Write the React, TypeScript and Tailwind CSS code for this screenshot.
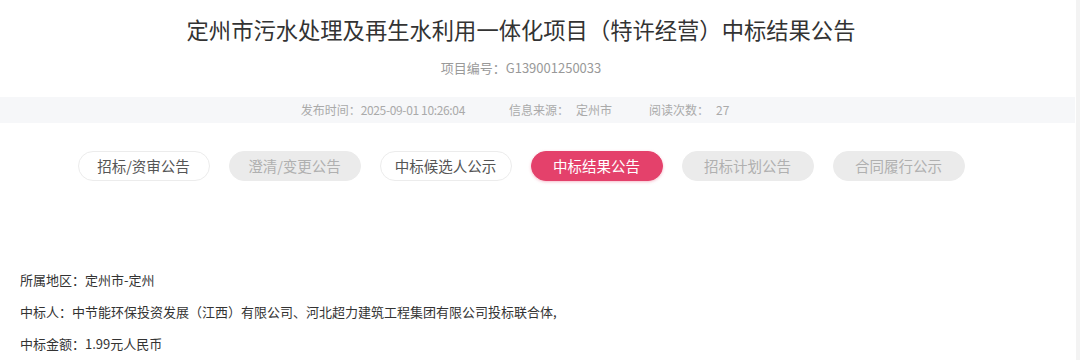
const tabs = [
  { label: "招标/资审公告", kind: "normal" },
  { label: "澄清/变更公告", kind: "disabled" },
  { label: "中标候选人公示", kind: "normal" },
  { label: "中标结果公告", kind: "active" },
  { label: "招标计划公告", kind: "disabled" },
  { label: "合同履行公示", kind: "disabled" },
];

const tabClass: Record<string, string> = {
  normal: "bg-white text-[#555] border border-[#ececec]",
  disabled: "bg-[#ebebeb] text-[#b0b0b0] border border-[#ebebeb]",
  active: "bg-[#e4416b] text-white border border-[#e4416b] shadow-[0_1px_3px_rgba(228,65,107,0.35)]",
};

const App = () => {
  return (
    <div
      className="w-[1080px] h-[360px] bg-white overflow-hidden flex"
      style={{ fontFamily: '"Noto Sans CJK SC", "Noto Sans", sans-serif' }}
    >
      <div className="w-[1076px] flex flex-col">
        <div className="w-[1042px] flex flex-col items-center">
          <h1 className="mt-[14px] text-[22.3px] leading-[30px] text-[#333] font-normal">
            定州市污水处理及再生水利用一体化项目（特许经营）中标结果公告
          </h1>
          <p className="mt-[16px] text-[13px] leading-[16px] text-[#999]">
            项目编号：G139001250033
          </p>
        </div>

        <div className="mt-[21px] h-[26px] w-[1075px] bg-[#f6f7f9] flex">
          <div className="w-[1030px] flex justify-center items-center text-[12px] text-[#aaa]">
            <span>
              发布时间：<span className="tracking-[-0.35px]">2025-09-01 10:26:04</span>
            </span>
            <span className="ml-[44px] flex gap-[7px]">
              <span>信息来源：</span>
              <span>定州市</span>
            </span>
            <span className="ml-[37px] flex gap-[7px]">
              <span>阅读次数：</span>
              <span>27</span>
            </span>
          </div>
        </div>

        <div className="w-[1042px] mt-[28px] flex justify-center gap-[19px]">
          {tabs.map((t) => (
            <div
              key={t.label}
              className={`w-[132px] h-[30px] rounded-full flex items-center justify-center text-[14.5px] ${tabClass[t.kind]}`}
            >
              {t.label}
            </div>
          ))}
        </div>

        <div className="mt-[90px] pl-[20px] flex flex-col gap-[14px] text-[13px] leading-[18px] text-[#333]">
          <p>所属地区：定州市-定州</p>
          <p>中标人：中节能环保投资发展（江西）有限公司、河北超力建筑工程集团有限公司投标联合体,</p>
          <p>中标金额：1.99元人民币</p>
        </div>
      </div>
      <div className="flex-1 bg-[#f3f3f3]" />
    </div>
  );
};

export default App;
